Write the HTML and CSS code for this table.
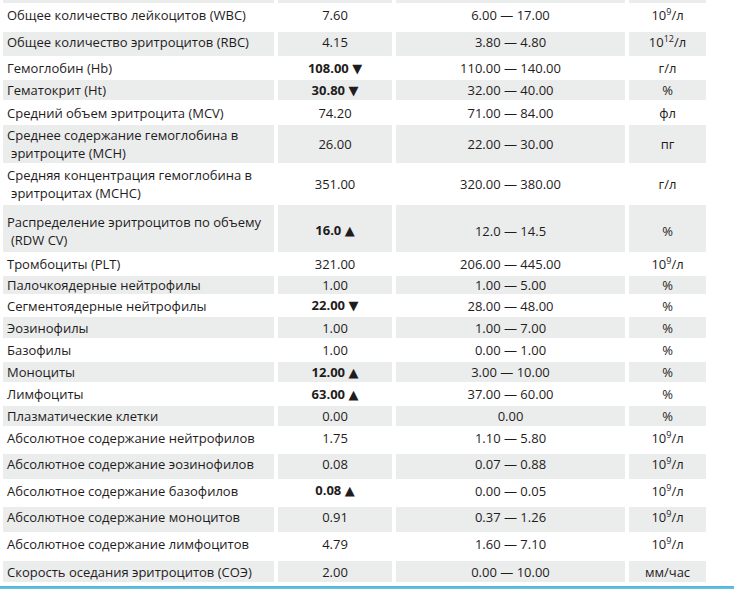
FILE: index.html
```html
<!DOCTYPE html>
<html lang="ru">
<head>
<meta charset="utf-8">
<title>Анализ крови</title>
<link rel="stylesheet" href="styles.css">
</head>
<body>
<div class="sheet">
<table class="labs">
<colgroup><col class="c-name"><col class="c-val"><col class="c-ref"><col class="c-unit"></colgroup>
<tr class="head"><td></td><td></td><td></td><td></td></tr>
<tr class="w r25 sp"><td>Общее количество лейкоцитов (WBC)</td><td>7.60</td><td>6.00 — 17.00</td><td>10<sup>9</sup>/л</td></tr>
<tr class="g r24 sp"><td>Общее количество эритроцитов (RBC)</td><td>4.15</td><td>3.80 — 4.80</td><td>10<sup>12</sup>/л</td></tr>
<tr class="w r20"><td>Гемоглобин (Hb)</td><td><b>108.00 <span class="arr">▼</span></b></td><td>110.00 — 140.00</td><td>г/л</td></tr>
<tr class="g r20"><td>Гематокрит (Ht)</td><td><b>30.80 <span class="arr">▼</span></b></td><td>32.00 — 40.00</td><td>%</td></tr>
<tr class="w r21"><td>Средний объем эритроцита (MCV)</td><td>74.20</td><td>71.00 — 84.00</td><td>фл</td></tr>
<tr class="g r38"><td>Среднее содержание гемоглобина в эритроците (MCH)</td><td>26.00</td><td>22.00 — 30.00</td><td>пг</td></tr>
<tr class="w r38"><td>Средняя концентрация гемоглобина в эритроцитах (MCHC)</td><td>351.00</td><td>320.00 — 380.00</td><td>г/л</td></tr>
<tr class="g r47 low"><td>Распределение эритроцитов по объему (RDW CV)</td><td><b>16.0 <span class="arr">▲</span></b></td><td>12.0 — 14.5</td><td>%</td></tr>
<tr class="w r20"><td>Тромбоциты (PLT)</td><td>321.00</td><td>206.00 — 445.00</td><td>10<sup>9</sup>/л</td></tr>
<tr class="g r17"><td>Палочкоядерные нейтрофилы</td><td>1.00</td><td>1.00 — 5.00</td><td>%</td></tr>
<tr class="w r18"><td>Сегментоядерные нейтрофилы</td><td><b>22.00 <span class="arr">▼</span></b></td><td>28.00 — 48.00</td><td>%</td></tr>
<tr class="g r21"><td>Эозинофилы</td><td>1.00</td><td>1.00 — 7.00</td><td>%</td></tr>
<tr class="w r20"><td>Базофилы</td><td>1.00</td><td>0.00 — 1.00</td><td>%</td></tr>
<tr class="g r20"><td>Моноциты</td><td><b>12.00 <span class="arr">▲</span></b></td><td>3.00 — 10.00</td><td>%</td></tr>
<tr class="w r20"><td>Лимфоциты</td><td><b>63.00 <span class="arr">▲</span></b></td><td>37.00 — 60.00</td><td>%</td></tr>
<tr class="g r20"><td>Плазматические клетки</td><td>0.00</td><td>0.00</td><td>%</td></tr>
<tr class="w r24 sp"><td>Абсолютное содержание нейтрофилов</td><td>1.75</td><td>1.10 — 5.80</td><td>10<sup>9</sup>/л</td></tr>
<tr class="g r25 sp"><td>Абсолютное содержание эозинофилов</td><td>0.08</td><td>0.07 — 0.88</td><td>10<sup>9</sup>/л</td></tr>
<tr class="w r24 sp"><td>Абсолютное содержание базофилов</td><td><b>0.08 <span class="arr">▲</span></b></td><td>0.00 — 0.05</td><td>10<sup>9</sup>/л</td></tr>
<tr class="g r25 sp"><td>Абсолютное содержание моноцитов</td><td>0.91</td><td>0.37 — 1.26</td><td>10<sup>9</sup>/л</td></tr>
<tr class="w r25 sp"><td>Абсолютное содержание лимфоцитов</td><td>4.79</td><td>1.60 — 7.10</td><td>10<sup>9</sup>/л</td></tr>
<tr class="g r21"><td>Скорость оседания эритроцитов (СОЭ)</td><td>2.00</td><td>0.00 — 10.00</td><td>мм/час</td></tr>
</table>
</div>
<div class="rule"></div>
</body>
</html>
```
FILE: styles.css
```css
html, body {
  margin: 0;
  padding: 0;
  background: #ffffff;
}
body {
  width: 734px;
  height: 589px;
  overflow: hidden;
  display: flex;
  flex-direction: column;
  font-family: "Open Sans", "Noto Sans", sans-serif;
  font-size: 13px;
  color: #1f1c1d;
}
.sheet {
  margin-top: -29px;
  height: 613px;
}
.labs {
  border-collapse: separate;
  border-spacing: 4px 2px;
  table-layout: fixed;
  width: 711px;
  margin-left: -1px;
}
.c-name { width: 271px; }
.c-val { width: 114px; }
.c-ref { width: 229px; }
.c-unit { width: 77px; }
.labs td {
  padding: 0;
  text-align: center;
  vertical-align: middle;
  line-height: 18px;
}
.labs td:first-child {
  text-align: left;
  padding-left: 8px;
  text-indent: -4px;
}
.head td { height: 30px; background: #ebecec; }
.g td { background: #ebecec; }
.w td { background: #ffffff; }
.r17 td { height: 17px; }
.r18 td { height: 18px; }
.r20 td { height: 20px; }
.r21 td { height: 21px; }
.r24 td { height: 24px; }
.r25 td { height: 25px; }
.r38 td { height: 38px; }
.r47 td { height: 47px; }
.sp.r24 td { height: 19px; padding-bottom: 5px; }
.sp.r25 td { height: 20px; padding-bottom: 5px; }
.low td { height: 43px; padding-top: 4px; }
.labs b { font-weight: 700; }
.arr {
  font-family: "DejaVu Sans", sans-serif;
  font-size: 13px;
}
.labs sup {
  font-size: 9px;
  line-height: 0;
  vertical-align: 5px;
}
.rule {
  height: 3px;
  margin-top: auto;
  background: linear-gradient(#4bb3d8, #6cc6e6);
}
```
